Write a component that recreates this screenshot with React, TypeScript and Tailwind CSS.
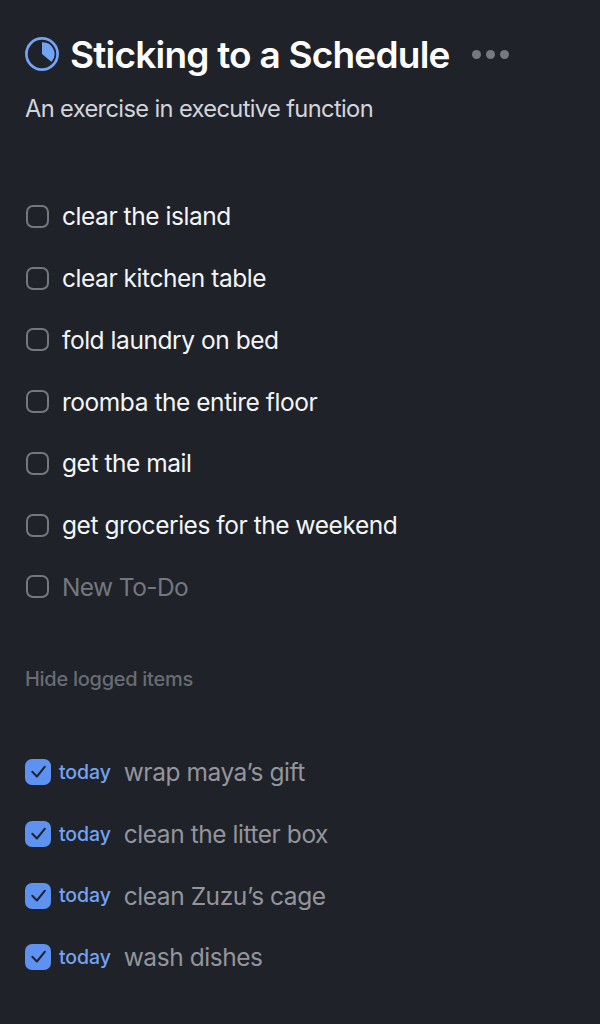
const openItems = [
  "clear the island",
  "clear kitchen table",
  "fold laundry on bed",
  "roomba the entire floor",
  "get the mail",
  "get groceries for the weekend",
];

const loggedItems = [
  "wrap maya’s gift",
  "clean the litter box",
  "clean Zuzu’s cage",
  "wash dishes",
];

const EmptyBox = () => (
  <span className="ml-px size-[23px] shrink-0 rounded-[7px] border-2 border-[#747780]" />
);

const CheckedBox = () => (
  <span className="flex size-[26px] shrink-0 items-center justify-center rounded-[7px] bg-[#5d92f0]">
    <svg width="26" height="26" viewBox="0 0 26 26" fill="none">
      <path
        d="M7.3 12.8L11.9 17.5L19.9 7.7"
        stroke="#1f2330"
        strokeWidth="2"
        strokeLinecap="round"
        strokeLinejoin="round"
      />
    </svg>
  </span>
);

const Header = () => (
  <header>
    <div className="flex h-10 items-center">
      <svg width="34" height="34" viewBox="0 0 34 34" className="shrink-0">
        <circle cx="17" cy="17" r="15.6" fill="none" stroke="#73a3f4" strokeWidth="2.7" />
        <path d="M17 5.2A11.8 11.8 0 0 1 27 24.2Q26.5 25.1 25.7 24.3L17 17Z" fill="#73a3f4" />
      </svg>
      <h1 className="ml-[11px] mt-0.5 whitespace-nowrap text-[37px] font-semibold leading-10 tracking-[-0.78px]">
        Sticking to a Schedule
      </h1>
      <div className="ml-[22px] flex gap-[5px]">
        <span className="size-[9px] rounded-full bg-[#767982]" />
        <span className="size-[9px] rounded-full bg-[#767982]" />
        <span className="size-[9px] rounded-full bg-[#767982]" />
      </div>
    </div>
    <p className="mt-[17px] h-9 whitespace-nowrap text-[23.7px] leading-9 tracking-[-0.65px] text-[#d2d4dc]">
      An exercise in executive function
    </p>
  </header>
);

const App = () => {
  return (
    <main className="h-[1024px] w-[600px] overflow-hidden bg-[#1f2228] pl-[25px] pt-[34px] font-['Inter',sans-serif] text-white">
      <Header />
      <ul className="mt-[58.4px]">
        {openItems.map((item) => (
          <li key={item} className="flex h-[61.75px] items-center gap-[13px]">
            <EmptyBox />
            <span className="mt-px whitespace-nowrap text-[24.5px] tracking-[-0.45px] text-[#f4f5f7]">{item}</span>
          </li>
        ))}
        <li className="flex h-[61.75px] items-center gap-[13px]">
          <EmptyBox />
          <span className="mt-px whitespace-nowrap text-[24.5px] tracking-[-0.6px] text-[#747780]">New To-Do</span>
        </li>
      </ul>
      <p className="mt-[46.3px] text-[20px] font-medium leading-[30px] tracking-[-0.28px] text-[#696c74]">
        Hide logged items
      </p>
      <ul className="mt-[47.3px]">
        {loggedItems.map((item) => (
          <li key={item} className="flex h-[61.75px] items-center">
            <CheckedBox />
            <span className="ml-2 mt-px text-[19.5px] font-medium tracking-[-0.1px] text-[#73a3f4]">today</span>
            <span className="ml-[13px] mt-px whitespace-nowrap text-[24.5px] tracking-[-0.45px] text-[#93959d]">{item}</span>
          </li>
        ))}
      </ul>
    </main>
  );
};

export default App;
